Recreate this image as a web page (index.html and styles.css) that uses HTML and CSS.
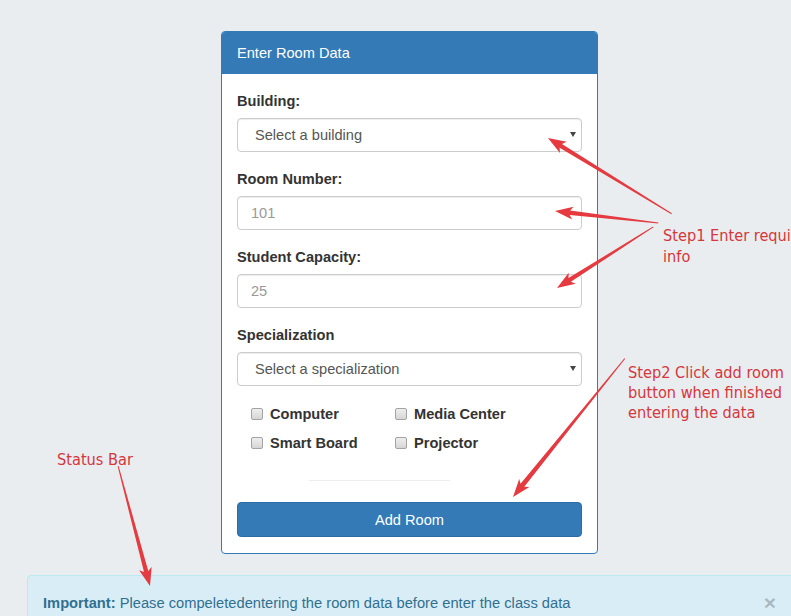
FILE: index.html
```html
<!DOCTYPE html>
<html lang="en">
<head>
<meta charset="utf-8">
<title>Enter Room Data</title>
<link rel="stylesheet" href="styles.css">
</head>
<body>
<div class="page">
  <section class="panel">
    <div class="panel-heading">Enter Room Data</div>
    <form class="panel-body">
      <div class="form-group">
        <label class="label">Building:</label>
        <div class="select-wrap"><select class="control select"><option>Select a building</option></select></div>
      </div>
      <div class="form-group">
        <label class="label">Room Number:</label>
        <input class="control input" type="text" placeholder="101">
      </div>
      <div class="form-group">
        <label class="label">Student Capacity:</label>
        <input class="control input" type="text" placeholder="25">
      </div>
      <div class="form-group">
        <label class="label">Specialization</label>
        <div class="select-wrap"><select class="control select"><option>Select a specialization</option></select></div>
      </div>
      <div class="checks">
        <label class="check"><span class="box"></span>Computer</label>
        <label class="check"><span class="box"></span>Media Center</label>
        <label class="check"><span class="box"></span>Smart Board</label>
        <label class="check"><span class="box"></span>Projector</label>
      </div>
      <hr class="divider">
      <button class="btn" type="button">Add Room</button>
    </form>
  </section>

  <div class="alert">
    <p class="alert-text"><strong>Important:</strong> Please compeletedentering the room data before enter the class data</p>
    <span class="close">×</span>
  </div>

  <div class="note note-step1">Step1 Enter required<br>info</div>
  <div class="note note-step2">Step2 Click add room<br>button when finished<br>entering the data</div>
  <div class="note note-status">Status Bar</div>

  <svg class="arrows" width="791" height="616" viewBox="0 0 791 616">
    <g fill="#e53a3f">
      <polygon transform="translate(548 138) rotate(31.5)" points="0,0 18,-6.5 15,-2.2 145,-0.5 145,0.5 15,2.2 18,6.5"/>
      <polygon transform="translate(555 211) rotate(6.65)" points="0,0 18,-6.5 15,-2.2 104,-0.5 104,0.5 15,2.2 18,6.5"/>
      <polygon transform="translate(557 288) rotate(-32.4)" points="0,0 18,-6.5 15,-2.2 114,-0.5 114,0.5 15,2.2 18,6.5"/>
      <polygon transform="translate(513 497) rotate(-51.1)" points="0,0 18,-6.5 15,-2.4 178,-0.5 178,0.5 15,2.4 18,6.5"/>
      <polygon transform="translate(150 586) rotate(-104.9)" points="0,0 18,-6.5 15,-2.2 124,-0.5 124,0.5 15,2.2 18,6.5"/>
    </g>
  </svg>
</div>
</body>
</html>
```

FILE: styles.css
```css
* { box-sizing: border-box; }

html, body {
  margin: 0;
  padding: 0;
}

body {
  background: #e9edf0;
  font-family: "Liberation Sans", Arial, sans-serif;
  font-size: 14.6px;
  color: #333;
  overflow: hidden;
}

.page {
  position: relative;
  width: 791px;
  height: 616px;
  padding-top: 31px;
  overflow: hidden;
}

/* Panel */
.panel {
  margin-left: 221px;
  width: 377px;
  background: #fff;
  border: 1px solid #337ab7;
  border-radius: 4px;
}

.panel-heading {
  height: 42px;
  padding: 1px 15px 0;
  line-height: 41px;
  background: #337ab7;
  color: #fff;
  font-size: 14.6px;
  border-radius: 3px 3px 0 0;
}

.panel-body {
  display: flex;
  flex-direction: column;
  margin: 0;
  padding: 17px 15px 16px;
}

.form-group {
  display: flex;
  flex-direction: column;
  margin-bottom: 17px;
}

.label {
  display: block;
  font-weight: bold;
  line-height: 20px;
  margin-bottom: 7px;
  color: #333;
}

.control {
  display: block;
  width: 100%;
  height: 34px;
  margin: 0;
  border: 1px solid #ccc;
  border-radius: 4px;
  background: #fff;
  font-family: "Liberation Sans", Arial, sans-serif;
  font-size: 14.6px;
  color: #555;
  box-shadow: inset 0 1px 1px rgba(0, 0, 0, 0.075);
  outline: none;
}

.input {
  padding: 0 12px 0 13px;
}

.input::placeholder {
  color: #999;
}

.select-wrap {
  position: relative;
}

.select {
  -webkit-appearance: none;
  appearance: none;
  padding: 0 17px;
}

.select-wrap::after {
  content: "";
  position: absolute;
  right: 6px;
  top: 14px;
  border-left: 3px solid transparent;
  border-right: 3px solid transparent;
  border-top: 5px solid #444;
}

/* Checkboxes */
.checks {
  display: grid;
  grid-template-columns: 144px auto;
  row-gap: 8.5px;
  padding: 1px 0 0 14px;
  margin-bottom: 2px;
}

.check {
  display: flex;
  align-items: center;
  font-weight: bold;
  line-height: 20px;
  color: #333;
}

.box {
  width: 12px;
  height: 12px;
  margin-right: 7px;
  border: 1px solid #a3a3a3;
  border-radius: 2px;
  background: linear-gradient(#eeeeee, #d6d6d6);
}

.divider {
  width: 141px;
  height: 0;
  margin: 25.5px 0 21px 72px;
  border: 0;
  border-top: 1px solid #eee;
}

.btn {
  display: block;
  width: 100%;
  height: 35px;
  padding: 0;
  border: 1px solid #2e6da4;
  border-radius: 4px;
  background: #337ab7;
  color: #fff;
  font-family: "Liberation Sans", Arial, sans-serif;
  font-size: 14.6px;
}

/* Alert / status bar */
.alert {
  display: flex;
  justify-content: space-between;
  align-items: flex-start;
  width: 779px;
  margin: 21px 0 0 27px;
  padding: 17px 29px 17px 15px;
  background: #d9edf7;
  border: 1px solid #bce8f1;
  border-radius: 4px;
  color: #31708f;
  font-size: 14.7px;
  line-height: 21px;
}

.alert-text {
  margin: 0;
}

.close {
  margin-top: -1px;
  font-size: 21px;
  font-weight: bold;
  line-height: 21px;
  color: #000;
  opacity: 0.22;
  text-shadow: 0 1px 0 #fff;
}

/* Annotations */
.note {
  position: absolute;
  font-family: "DejaVu Sans Condensed", "DejaVu Sans", sans-serif;
  font-stretch: condensed;
  font-size: 16.2px;
  color: #d6363c;
  white-space: nowrap;
}

.note-step1 {
  left: 663px;
  top: 226px;
  line-height: 20.5px;
}

.note-step2 {
  left: 628px;
  top: 363px;
  line-height: 20px;
}

.note-status {
  left: 57px;
  top: 450px;
  line-height: 20px;
}

.arrows {
  position: absolute;
  left: 0;
  top: 0;
  pointer-events: none;
}
```
